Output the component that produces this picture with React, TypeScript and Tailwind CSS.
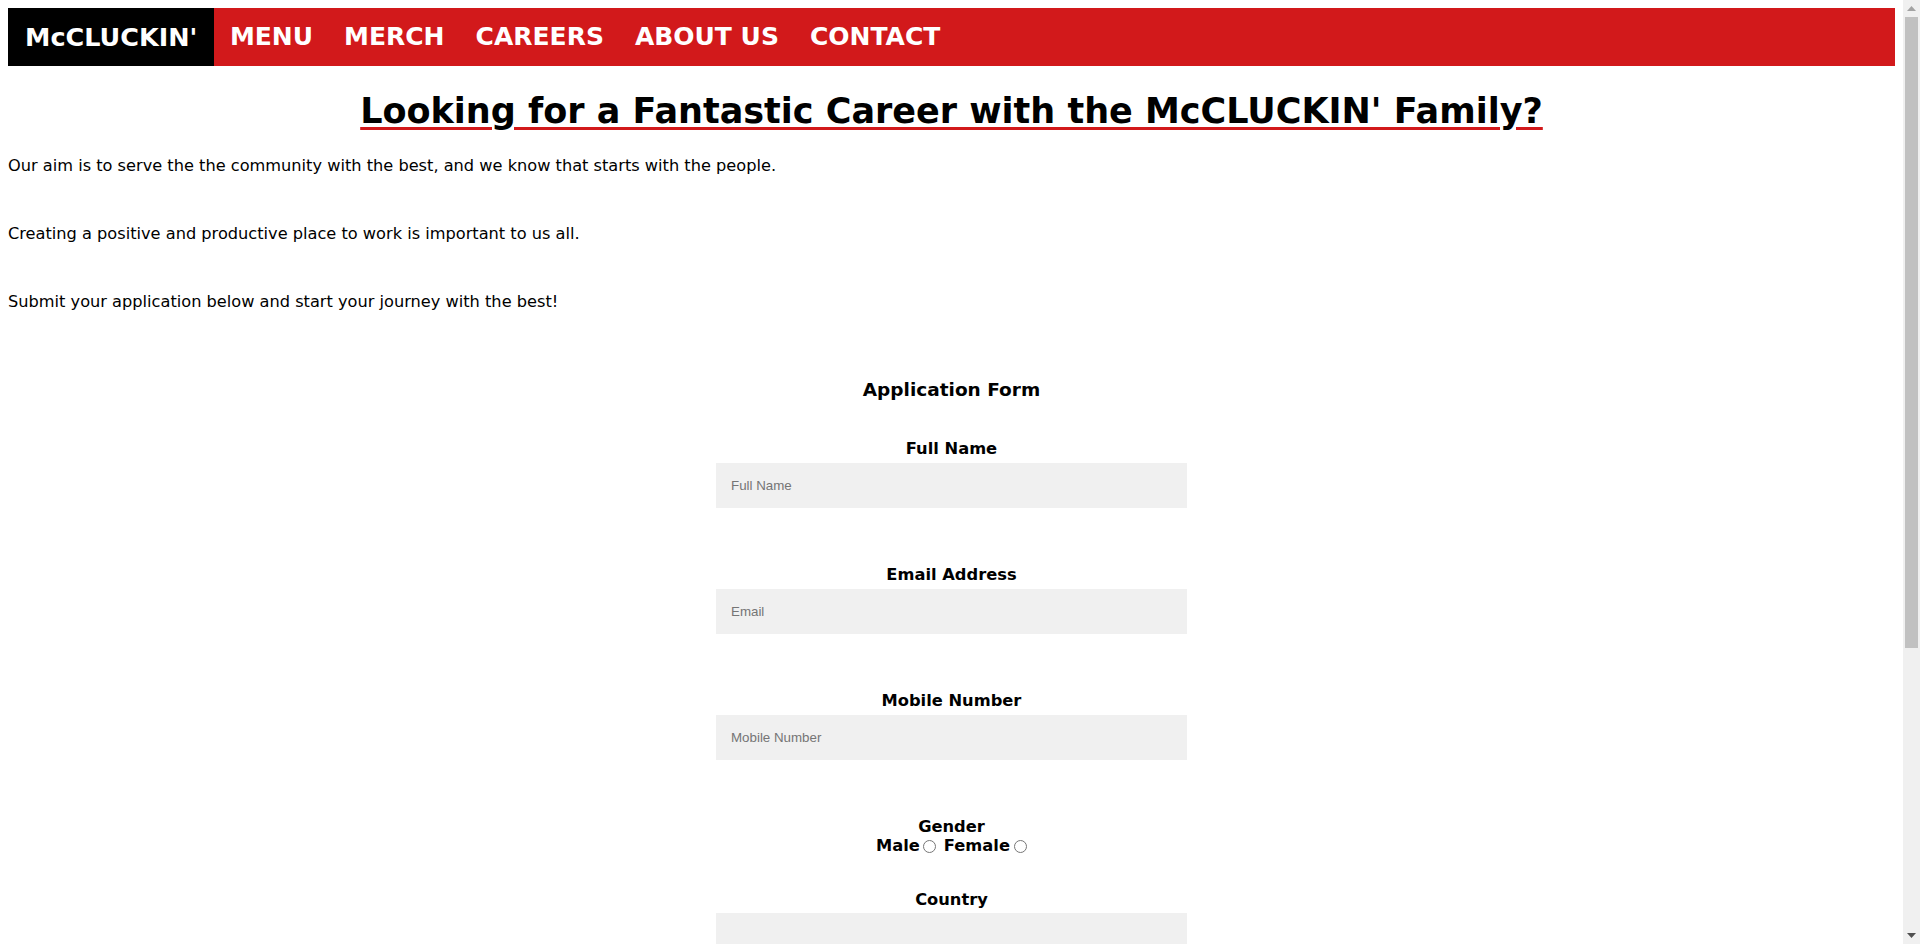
import { useState } from "react";

const NAV_LINKS = ["MENU", "MERCH", "CAREERS", "ABOUT US", "CONTACT"];

const TEXT_FIELDS = [
  { id: "fullname", label: "Full Name", placeholder: "Full Name", type: "text" },
  { id: "email", label: "Email Address", placeholder: "Email", type: "email" },
  { id: "mobile", label: "Mobile Number", placeholder: "Mobile Number", type: "tel" },
];

const inputClass =
  "block h-[45px] w-[471px] bg-[#f0f0f0] px-[15px] font-['Liberation_Sans',Arial,sans-serif] text-[13.33px] text-black outline-none placeholder:text-[#757575]";

function NavBar() {
  return (
    <nav className="flex h-[58px] items-stretch bg-[#d2191b]">
      <a
        href="#"
        className="flex items-center bg-black px-[17px] text-[25.5px] font-bold text-white"
      >
        McCLUCKIN'
      </a>
      {NAV_LINKS.map((link) => (
        <a
          key={link}
          href="#"
          className="flex items-center px-[15.5px] text-[25px] font-bold text-white"
        >
          {link}
        </a>
      ))}
    </nav>
  );
}

// page scrollbar as it shows in the reference
function ScrollTrack() {
  return (
    <aside className="flex h-screen w-[17px] shrink-0 flex-col items-center bg-[#f0f0f0]">
      <div className="flex h-[17px] items-center justify-center">
        <svg width="9" height="5" viewBox="0 0 9 5">
          <path d="M0 5 L4.5 0 L9 5 Z" fill="#a3a3a3" />
        </svg>
      </div>
      <div className="h-[631px] w-[13px] bg-[#c1c1c1]" />
      <div className="flex-1" />
      <div className="flex h-[17px] items-center justify-center">
        <svg width="9" height="5" viewBox="0 0 9 5">
          <path d="M0 0 L9 0 L4.5 5 Z" fill="#505050" />
        </svg>
      </div>
    </aside>
  );
}

export default function App() {
  const [gender, setGender] = useState("");

  return (
    <div className="flex h-screen">
      <main className="min-w-0 flex-1 overflow-y-auto [scrollbar-width:none]">
        <div className="p-2 font-['DejaVu_Sans',Verdana,sans-serif] text-black">
          <NavBar />

          <h1 className="mt-[26px] text-center text-[35px] leading-[38px] font-bold underline decoration-[#d2191b] decoration-[3px] underline-offset-[4px]">
            Looking for a Fantastic Career with the McCLUCKIN' Family?
          </h1>

          <p className="mt-[26px] text-[16.2px] leading-[19px]">
            Our aim is to serve the the community with the best, and we know
            that starts with the people.
          </p>
          <p className="mt-[49px] text-[16.2px] leading-[19px]">
            Creating a positive and productive place to work is important to us
            all.
          </p>
          <p className="mt-[49px] text-[16.2px] leading-[19px]">
            Submit your application below and start your journey with the best!
          </p>

          <form
            className="mx-auto mt-[68px] flex w-[471px] flex-col items-center pb-[180px]"
            onSubmit={(e) => e.preventDefault()}
          >
            <h3 className="text-[18.5px] leading-[22px] font-bold">Application Form</h3>

            {TEXT_FIELDS.map((field, i) => (
              <div
                key={field.id}
                className={
                  i === 0
                    ? "mt-[38px] flex flex-col items-center"
                    : "mt-[57px] flex flex-col items-center"
                }
              >
                <label htmlFor={field.id} className="text-[16.3px] leading-[19px] font-bold">
                  {field.label}
                </label>
                <input
                  id={field.id}
                  type={field.type}
                  placeholder={field.placeholder}
                  className={"mt-[5px] " + inputClass}
                />
              </div>
            ))}

            <div className="mt-[57px] flex flex-col items-center text-[16.3px] font-bold">
              <span className="leading-[19px]">Gender</span>
              <div className="flex items-center leading-[20px]">
                <label htmlFor="male">Male</label>
                <input
                  id="male"
                  type="radio"
                  name="gender"
                  checked={gender === "male"}
                  onChange={() => setGender("male")}
                  className="ml-[3px] h-[13px] w-[13px]"
                />
                <label htmlFor="female" className="ml-[8px]">
                  Female
                </label>
                <input
                  id="female"
                  type="radio"
                  name="gender"
                  checked={gender === "female"}
                  onChange={() => setGender("female")}
                  className="ml-[4px] h-[13px] w-[13px]"
                />
              </div>
            </div>

            <div className="mt-[34px] flex flex-col items-center">
              <label htmlFor="country" className="text-[16.3px] leading-[19px] font-bold">
                Country
              </label>
              <select
                id="country"
                defaultValue=""
                className={"mt-[4px] appearance-none " + inputClass}
              >
                <option value="" disabled></option>
                <option>United Kingdom</option>
                <option>United States</option>
                <option>Ireland</option>
                <option>Australia</option>
              </select>
            </div>

            <div className="mt-[57px] flex flex-col items-center">
              <label htmlFor="position" className="text-[16.3px] leading-[19px] font-bold">
                Position
              </label>
              <input
                id="position"
                type="text"
                placeholder="Position"
                className={"mt-[5px] " + inputClass}
              />
            </div>

            <button
              type="submit"
              className="mt-[40px] bg-[#d2191b] px-6 py-3 text-[16px] font-bold text-white"
            >
              Submit
            </button>
          </form>
        </div>
      </main>
      <ScrollTrack />
    </div>
  );
}
